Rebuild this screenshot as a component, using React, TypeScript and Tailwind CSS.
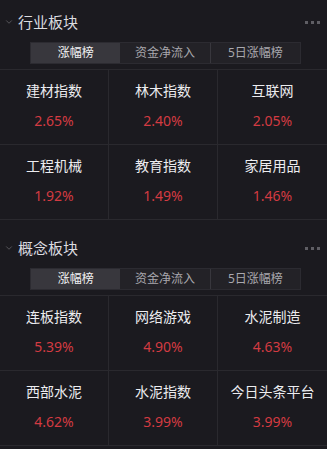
import { ChevronDown } from "lucide-react";

type Item = { name: string; pct: string };

const sections: { title: string; items: Item[]; pt: string }[] = [
  {
    title: "行业板块",
    pt: "pt-[8px]",
    items: [
      { name: "建材指数", pct: "2.65%" },
      { name: "林木指数", pct: "2.40%" },
      { name: "互联网", pct: "2.05%" },
      { name: "工程机械", pct: "1.92%" },
      { name: "教育指数", pct: "1.49%" },
      { name: "家居用品", pct: "1.46%" },
    ],
  },
  {
    title: "概念板块",
    pt: "pt-[14px]",
    items: [
      { name: "连板指数", pct: "5.39%" },
      { name: "网络游戏", pct: "4.90%" },
      { name: "水泥制造", pct: "4.63%" },
      { name: "西部水泥", pct: "4.62%" },
      { name: "水泥指数", pct: "3.99%" },
      { name: "今日头条平台", pct: "3.99%" },
    ],
  },
];

const tabs = ["涨幅榜", "资金净流入", "5日涨幅榜"];

function Section({ title, items, pt }: { title: string; items: Item[]; pt: string }) {
  return (
    <div className={pt}>
      <div className="flex items-center h-[28px] pl-[4px] pr-[7px]">
        <ChevronDown size={10} strokeWidth={1.5} className="text-[#77767c] mr-[4px]" />
        <span className="text-[15px] leading-[28px] text-[#dcdce0]">{title}</span>
        <div className="ml-auto flex gap-[3px]">
          <span className="w-[3px] h-[3px] bg-[#5f5e64]" />
          <span className="w-[3px] h-[3px] bg-[#5f5e64]" />
          <span className="w-[3px] h-[3px] bg-[#5f5e64]" />
        </div>
      </div>

      <div className="mt-[6px] ml-[30px] w-[271px] h-[22px] flex bg-[#232227] border border-[#2c2b31]">
        {tabs.map((t, i) => (
          <div
            key={t}
            className={`flex-1 flex items-center justify-center text-[12px] ${
              i === 0 ? "bg-[#38373d] text-[#f2f2f4]" : "text-[#a9a8ae]"
            } ${i === 2 ? "border-l border-[#38373d]" : ""}`}
          >
            {t}
          </div>
        ))}
      </div>

      <div className="mt-[5px] grid grid-cols-3 border-t border-[#2a292e]">
        {items.map((it, i) => (
          <div
            key={it.name}
            className={`h-[75px] pt-[11px] flex flex-col items-center border-b border-[#2a292e] ${
              i % 3 !== 2 ? "border-r" : ""
            }`}
          >
            <div className="text-[14px] leading-[20px] text-[#ececef]">{it.name}</div>
            <div className="mt-[10px] text-[14px] leading-[20px] text-[#d33b42]">{it.pct}</div>
          </div>
        ))}
      </div>
    </div>
  );
}

export default function App() {
  return (
    <div
      className="w-[327px] h-[449px] overflow-hidden bg-[#1b1a1f]"
      style={{ fontFamily: '"Noto Sans", "Noto Sans CJK SC", sans-serif' }}
    >
      {sections.map((s) => (
        <Section key={s.title} title={s.title} items={s.items} pt={s.pt} />
      ))}
    </div>
  );
}
